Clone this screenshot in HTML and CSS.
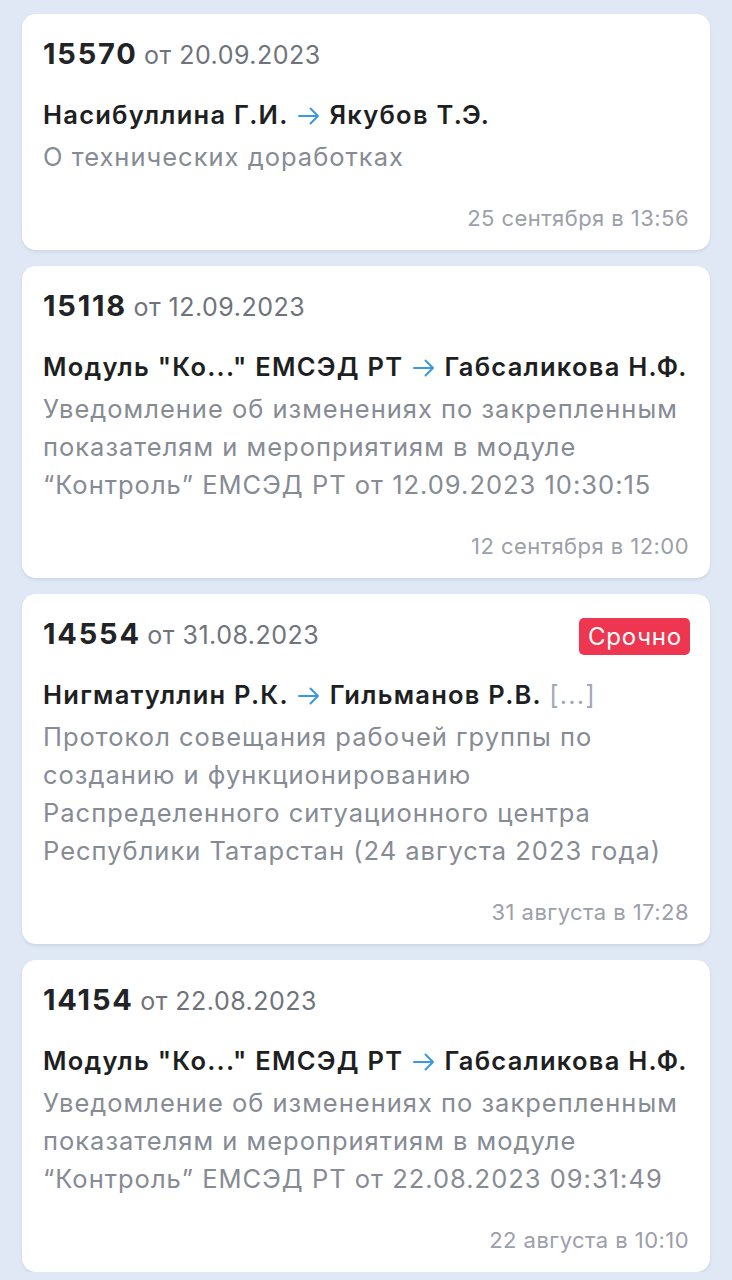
FILE: index.html
```html
<!DOCTYPE html>
<html lang="ru">
<head>
<meta charset="utf-8">
<link rel="stylesheet" href="styles.css">
</head>
<body>
<div class="list">
  <div class="card">
    <div class="head"><div class="title"><span class="num">15570</span> <span class="from">от 20.09.2023</span></div></div>
    <div class="names">Насибуллина Г.И. <svg class="arrow" viewBox="0 0 22 18"><path d="M1 9H20M12.5 1.5L20 9L12.5 16.5"/></svg> Якубов Т.Э.</div>
    <div class="body">О технических доработках</div>
    <div class="foot">25 сентября в 13:56</div>
  </div>
  <div class="card">
    <div class="head"><div class="title"><span class="num">15118</span> <span class="from">от 12.09.2023</span></div></div>
    <div class="names">Модуль "Ко..." ЕМСЭД РТ <svg class="arrow" viewBox="0 0 22 18"><path d="M1 9H20M12.5 1.5L20 9L12.5 16.5"/></svg> Габсаликова Н.Ф.</div>
    <div class="body">Уведомление об изменениях по закрепленным показателям и мероприятиям в модуле “Контроль” ЕМСЭД РТ от 12.09.2023 10:30:15</div>
    <div class="foot">12 сентября в 12:00</div>
  </div>
  <div class="card">
    <div class="head"><div class="title"><span class="num">14554</span> <span class="from">от 31.08.2023</span></div><span class="badge">Срочно</span></div>
    <div class="names">Нигматуллин Р.К. <svg class="arrow" viewBox="0 0 22 18"><path d="M1 9H20M12.5 1.5L20 9L12.5 16.5"/></svg> Гильманов Р.В. <span class="more">[...]</span></div>
    <div class="body">Протокол совещания рабочей группы по созданию и функционированию Распределенного ситуационного центра Республики Татарстан (24 августа 2023 года)</div>
    <div class="foot">31 августа в 17:28</div>
  </div>
  <div class="card">
    <div class="head"><div class="title"><span class="num">14154</span> <span class="from">от 22.08.2023</span></div></div>
    <div class="names">Модуль "Ко..." ЕМСЭД РТ <svg class="arrow" viewBox="0 0 22 18"><path d="M1 9H20M12.5 1.5L20 9L12.5 16.5"/></svg> Габсаликова Н.Ф.</div>
    <div class="body">Уведомление об изменениях по закрепленным показателям и мероприятиям в модуле “Контроль” ЕМСЭД РТ от 22.08.2023 09:31:49</div>
    <div class="foot">22 августа в 10:10</div>
  </div>
</div>
</body>
</html>
```

FILE: styles.css
```css
html, body {
  margin: 0;
  padding: 0;
  background: #dfe8f4;
}
body {
  font-family: Inter, "Noto Sans", sans-serif;
  -webkit-font-smoothing: antialiased;
}
.list {
  display: flex;
  flex-direction: column;
  gap: 16px;
  padding: 14px 22px 0 22px;
}
.card {
  background: #ffffff;
  border-radius: 14px;
  box-shadow: 0 2px 3px rgba(120, 140, 170, 0.18);
  padding: 24px 21px 17px 21px;
  display: flex;
  flex-direction: column;
}
.head {
  display: flex;
  justify-content: space-between;
  align-items: center;
  height: 36px;
}
.title {
  line-height: 36px;
  white-space: nowrap;
  word-spacing: 2px;
}
.num {
  font-size: 29px;
  font-weight: 700;
  color: #222326;
  letter-spacing: 1.8px;
}
.from {
  font-size: 25px;
  color: #6f737b;
  letter-spacing: 0.5px;
  word-spacing: 0;
}
.badge {
  background: #ef3650;
  color: #ffffff;
  font-size: 24px;
  letter-spacing: 0.8px;
  line-height: 37px;
  padding: 0 8px 0 9px;
  border-radius: 5px;
  margin-right: -1px;
}
.names {
  margin-top: 22px;
  font-size: 25.5px;
  letter-spacing: 1.25px;
  line-height: 38px;
  font-weight: 600;
  color: #1e1f22;
  white-space: nowrap;
}
.arrow {
  width: 22px;
  height: 18px;
  vertical-align: -1px;
  fill: none;
  stroke: #3a97e6;
  stroke-width: 2;
  stroke-linecap: round;
  stroke-linejoin: round;
  margin: 0 2px;
}
.more {
  font-weight: 400;
  color: #a0a7b6;
}
.body {
  margin-top: 4px;
  font-size: 25.5px;
  letter-spacing: 1px;
  line-height: 38px;
  color: #868b94;
}
.foot {
  margin-top: 27px;
  text-align: right;
  font-size: 22px;
  letter-spacing: 0.45px;
  line-height: 30px;
  color: #9ba0a9;
}
```
